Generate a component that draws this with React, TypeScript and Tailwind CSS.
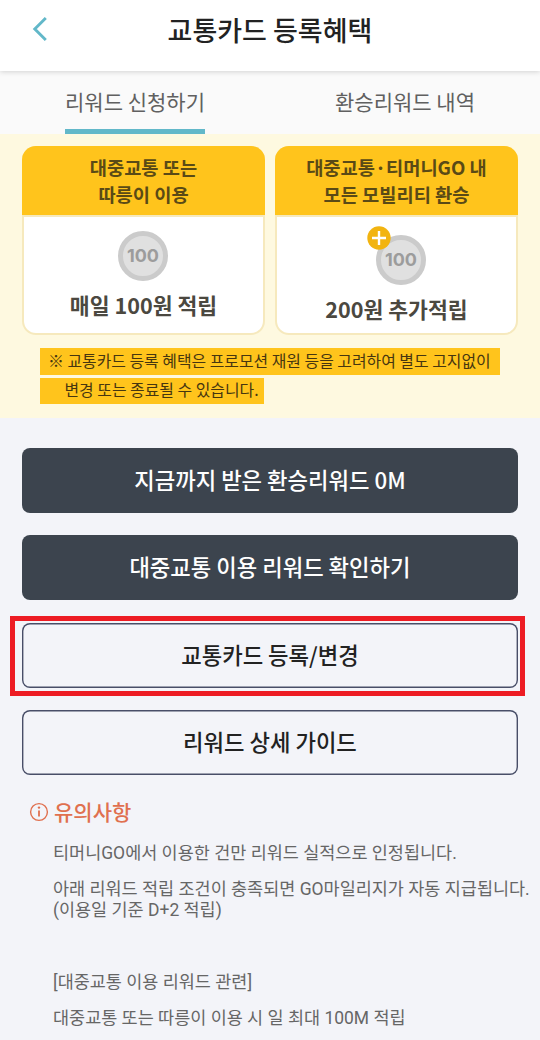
import type { ReactNode } from "react";

function Coin() {
  return (
    <div className="flex size-[50px] items-center justify-center rounded-full border-[5px] border-[#cbcbcb] bg-[#e0e0e0] font-['Inter','Liberation_Sans',sans-serif] text-[18px] leading-none font-bold text-[#9c9c9c]">
      100
    </div>
  );
}

function BenefitCard({ title, children }: { title: ReactNode; children: ReactNode }) {
  return (
    <section className="flex h-[189px] flex-1 flex-col overflow-hidden rounded-[14px] bg-[#f6e9bd]">
      <h2 className="h-[69px] shrink-0 bg-[#ffc41c] pt-[7px] text-center text-[18.7px] leading-[27px] font-bold text-[#5a4a16]">
        {title}
      </h2>
      <div className="mx-[2px] mt-[2px] mb-[2px] flex flex-1 flex-col items-center rounded-b-[12px] bg-white text-[#4b4840]">
        {children}
      </div>
    </section>
  );
}

function Action({ dark = false, children }: { dark?: boolean; children: ReactNode }) {
  const tone = dark
    ? "bg-[#3c444e] text-white"
    : "bg-[#f3f4f9] text-[#222] inset-ring-[1.4px] inset-ring-[#484e68]";
  return (
    <button
      className={`flex h-[65px] w-full items-center justify-center rounded-[8px] pb-[3px] text-[22.25px] leading-[32px] font-medium ${tone}`}
    >
      {children}
    </button>
  );
}

export default function App() {
  return (
    <main className="flex h-[1040px] w-[540px] flex-col overflow-hidden bg-[#f3f4f9] font-['Noto_Sans_CJK_KR',sans-serif] whitespace-nowrap">
      <header className="relative z-10 grid h-[71px] shrink-0 grid-cols-[80px_1fr_80px] bg-white shadow-[0_1px_5px_rgba(0,0,0,0.16)]">
        <button aria-label="뒤로" className="flex h-[58px] items-center pl-[32px]">
          <svg width="16" height="26" viewBox="0 0 16 26" fill="none">
            <path d="M13.8 2 2.8 13l11 11" stroke="#62b8c9" strokeWidth="2.9" />
          </svg>
        </button>
        <h1 className="pt-[10px] text-center text-[27px] leading-[40px] font-medium text-[#222]">교통카드 등록혜택</h1>
      </header>

      <nav className="flex h-[63px] shrink-0 bg-[#fafafa] text-[21px] leading-[30px] text-[#606060]">
        <div className="flex flex-1 flex-col items-center">
          <div className="flex h-[63px] flex-col border-b-[5px] border-[#62b8c9] pt-[15px]">리워드 신청하기</div>
        </div>
        <div className="flex flex-1 justify-center pt-[15px]">환승리워드 내역</div>
      </nav>

      <div className="h-[284px] shrink-0 bg-[#fef9e0] px-[22px] pt-[12px]">
        <div className="flex gap-[10px]">
          <BenefitCard title={<>대중교통 또는<br />따릉이 이용</>}>
            <div className="mt-[14px] -ml-px">
              <Coin />
            </div>
            <p className="mt-[8px] text-[21.6px] leading-[32px] font-bold">매일 100원 적립</p>
          </BenefitCard>
          <BenefitCard title={<>대중교통·티머니GO 내<br />모든 모빌리티 환승</>}>
            <div className="relative mt-[18px] ml-[9px]">
              <Coin />
              <svg className="absolute -top-[9px] -left-[9px]" width="24" height="24" viewBox="0 0 24 24">
                <circle cx="12" cy="12" r="11.7" fill="#f2b410" />
                <path d="M5 12h14M12 5v14" stroke="#fff" strokeWidth="2.4" />
              </svg>
            </div>
            <p className="mt-[8px] text-[21.6px] leading-[32px] font-bold">200원 추가적립</p>
          </BenefitCard>
        </div>
        <div className="mt-[13px] ml-[18px] flex flex-col items-start gap-[3px] text-[15.9px] text-[#463610]">
          <p className="h-[27px] w-[460px] bg-[#ffc41c] pl-[8px] leading-[26px]">※ 교통카드 등록 혜택은 프로모션 재원 등을 고려하여 별도 고지없이</p>
          <p className="h-[26px] w-[224px] bg-[#ffc41c] pl-[24.5px] leading-[24px]">변경 또는 종료될 수 있습니다.</p>
        </div>
      </div>

      <div className="relative mt-[29.6px] flex shrink-0 flex-col gap-[22.5px] pr-[22.5px] pl-[22.4px]">
        <Action dark>지금까지 받은 환승리워드 0M</Action>
        <Action dark>대중교통 이용 리워드 확인하기</Action>
        <Action>교통카드 등록/변경</Action>
        <Action>리워드 상세 가이드</Action>
        <div className="pointer-events-none absolute top-[168.4px] left-[10px] h-[80px] w-[515px] border-[5px] border-[#ed1c24]" />
      </div>

      <section className="px-[29px] pt-[21.1px]">
        <h2 className="flex h-[32px] items-center gap-[5px] text-[21px] leading-[30px] font-medium text-[#e0704f]">
          <svg width="20" height="20" viewBox="0 0 20 20" fill="none">
            <circle cx="10" cy="10" r="8.4" stroke="#e0704f" strokeWidth="1.4" />
            <path d="M10 8.4v6.2" stroke="#e0704f" strokeWidth="1.8" />
            <circle cx="10" cy="5.6" r="1.2" fill="#e0704f" />
          </svg>
          <span className="-mt-[2px]">유의사항</span>
        </h2>
        <div className="pt-[15px] pl-[24px] font-['Roboto','Noto_Sans_CJK_KR',sans-serif] text-[17.48px] leading-[21px] text-[#666]">
          <p>티머니GO에서 이용한 건만 리워드 실적으로 인정됩니다.</p>
          <p className="mt-[15px]">아래 리워드 적립 조건이 충족되면 GO마일리지가 자동 지급됩니다.<br />(이용일 기준 D+2 적립)</p>
          <p className="mt-[51px]">[대중교통 이용 리워드 관련]</p>
          <p className="mt-[15px]">대중교통 또는 따릉이 이용 시 일 최대 100M 적립</p>
        </div>
      </section>
    </main>
  );
}
